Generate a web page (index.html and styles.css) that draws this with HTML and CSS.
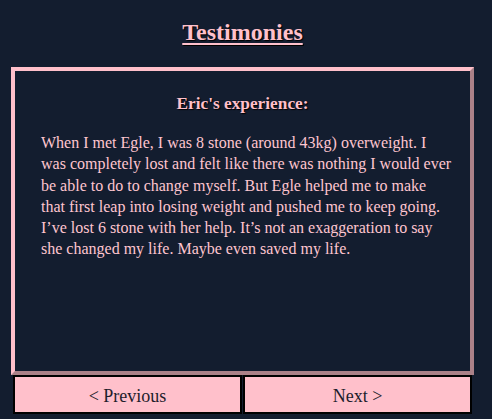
FILE: index.html
```html
<!DOCTYPE html>
<html lang="en">
<head>
<meta charset="utf-8">
<title>Testimonies</title>
<link rel="stylesheet" href="styles.css">
</head>
<body>
<div class="page">
  <h1 class="title">Testimonies</h1>
  <section class="card">
    <h2 class="card-title">Eric's experience:</h2>
    <p class="card-text">When I met Egle, I was 8 stone (around 43kg) overweight. I<br>was completely lost and felt like there was nothing I would ever<br>be able to do to change myself. But Egle helped me to make<br>that first leap into losing weight and pushed me to keep going.<br>I’ve lost 6 stone with her help. It’s not an exaggeration to say<br>she changed my life. Maybe even saved my life.</p>
  </section>
  <div class="nav">
    <button class="nav-btn">&lt; Previous</button>
    <button class="nav-btn">Next &gt;</button>
  </div>
</div>
</body>
</html>
```
FILE: styles.css
```css
html, body {
  margin: 0;
  padding: 0;
  background: #131d2f;
}
body {
  font-family: "Liberation Serif", "Times New Roman", serif;
  color: #ffc0cb;
}
.page {
  width: 463px;
  margin-left: 11px;
  padding-top: 18px;
}
.title {
  margin: 0 0 21px;
  font-size: 24px;
  line-height: 28px;
  font-weight: bold;
  text-align: center;
  text-decoration: underline;
  text-decoration-thickness: 2px;
  text-underline-offset: 3px;
  text-shadow: 1px 1px 1px #000;
}
.card {
  height: 308px;
  box-sizing: border-box;
  border: 4px outset #ffc0cb;
  padding: 22px 26px 0;
}
.card-title {
  margin: 0 0 17px;
  font-size: 17.3px;
  line-height: 22px;
  font-weight: bold;
  text-align: center;
  text-shadow: 1px 1px 1px #000;
}
.card-text {
  margin: 0;
  font-size: 16px;
  line-height: 21.3px;
  white-space: nowrap;
  color: #ffc6d0;
}
.nav {
  display: flex;
  gap: 1px;
  padding: 0 2px;
}
.nav-btn {
  flex: 1;
  height: 39px;
  margin: 0;
  padding: 3px 0 0;
  background: #ffc0cb;
  border: 2px solid #000;
  color: #1d1d2b;
  font-family: "Liberation Serif", "Times New Roman", serif;
  font-size: 18px;
}
```
